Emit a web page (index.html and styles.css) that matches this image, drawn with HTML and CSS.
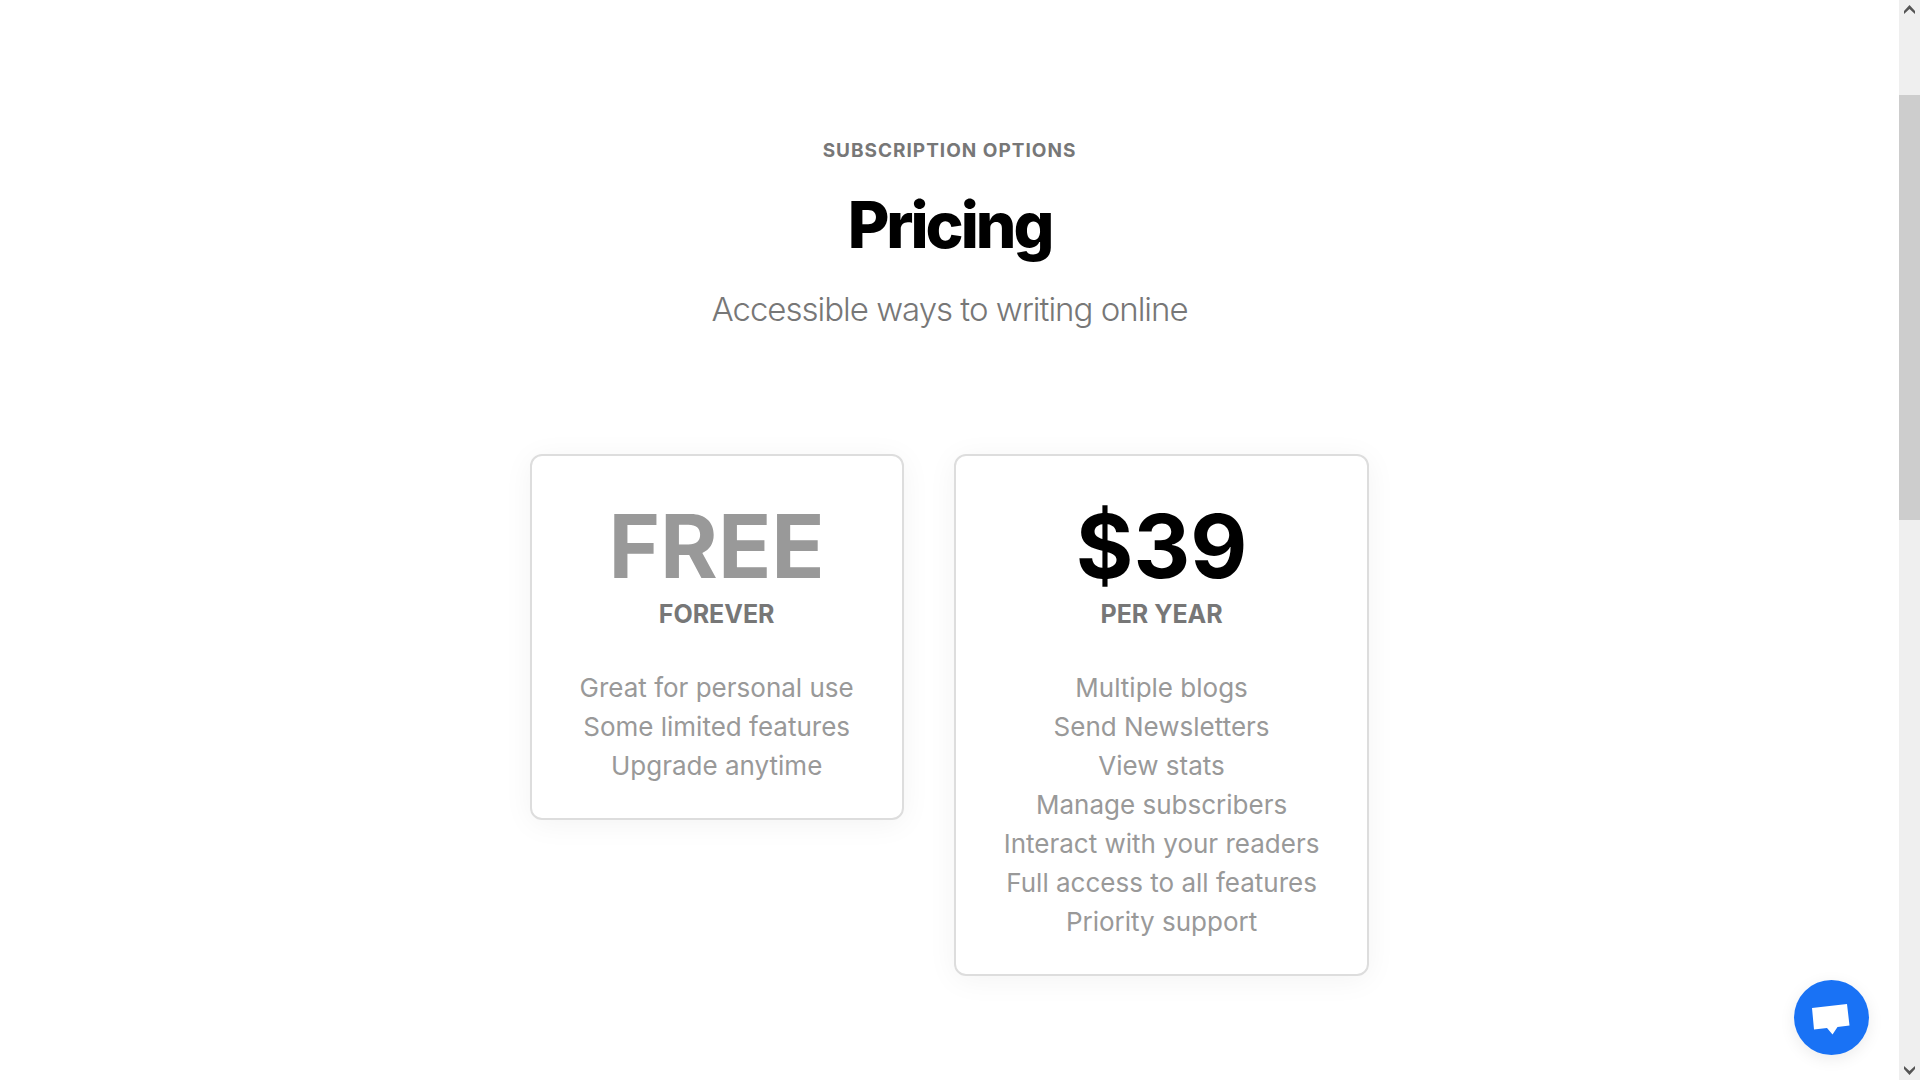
FILE: index.html
```
<!DOCTYPE html>
<html lang="en">
<head>
  <meta charset="utf-8">
  <meta name="viewport" content="width=device-width, initial-scale=1">
  <title>Pricing</title>
  <link rel="stylesheet" href="styles.css">
</head>
<body>

  <main class="page">
    <header class="intro">
      <p class="label">SUBSCRIPTION OPTIONS</p>
      <h1>Pricing</h1>
      <p class="subtitle">Accessible ways to writing online</p>
    </header>

    <section class="plans">
      <div class="plan">
        <h2 class="price free">FREE</h2>
        <h3>FOREVER</h3>
        <ul>
          <li>Great for personal use</li>
          <li>Some limited features</li>
          <li>Upgrade anytime</li>
        </ul>
      </div>
      <div class="plan">
        <h2 class="price">$39</h2>
        <h3>PER YEAR</h3>
        <ul>
          <li>Multiple blogs</li>
          <li>Send Newsletters</li>
          <li>View stats</li>
          <li>Manage subscribers</li>
          <li>Interact with your readers</li>
          <li>Full access to all features</li>
          <li>Priority support</li>
        </ul>
      </div>
    </section>
  </main>

  <!-- scrollbar -->
  <div class="scrollbar">
    <svg class="arrow" viewBox="0 0 21 19"><path d="M5 14V11L10.500 5L16 11V14L10.500 9Z"/></svg>
    <div class="track"><div class="thumb"></div></div>
    <svg class="arrow" viewBox="0 0 21 19"><path d="M5 5V8L10.500 14L16 8V5L10.500 10Z"/></svg>
  </div>

  <button class="chat" type="button" aria-label="Open chat">
    <svg viewBox="0 0 75 75"><path d="M18 28L53 24L55.500 45.500L43.500 47L38.500 54.500L33 48L20 49.500Z"/></svg>
  </button>

</body>
</html>
```
FILE: styles.css
```
* {
  box-sizing: border-box;
}

body {
  margin: 0;
  display: flex;
  height: 100vh;
  overflow: hidden;
  background-color: #fff;
  color: #000;
  font-family: Inter, "Liberation Sans", sans-serif;
  text-align: center;
}

h1, h2, h3, p, ul {
  margin: 0;
  padding: 0;
}

.page {
  flex: 1;
  padding: 137px 24px 0;
}

.label {
  color: #777;
  font-size: 19px;
  font-weight: 700;
  line-height: 28px;
  letter-spacing: 1px;
}

h1 {
  margin-top: 20px;
  font-size: 64px;
  font-weight: 800;
  line-height: 80px;
  letter-spacing: -3px;
}

.subtitle {
  margin-top: 23px;
  color: #777;
  font-size: 33px;
  font-weight: 300;
  line-height: 42px;
  letter-spacing: -1px;
}

.plans {
  display: flex;
  flex-wrap: wrap;
  justify-content: center;
  align-items: flex-start;
  gap: 50px;
  margin-top: 124px;
}

.plan {
  padding: 46px 48px 33px;
  border: 2px solid #ddd;
  border-radius: 12px;
  box-shadow: 0 4px 30px rgba(0, 0, 0, 0.05);
}

.price {
  font-size: 88px;
  font-weight: 700;
  line-height: 88px;
}

.free {
  color: #999;
}

h3 {
  margin-top: 8px;
  color: #777;
  font-size: 25px;
  font-weight: 700;
  line-height: 32px;
}

ul {
  margin-top: 38px;
  list-style: none;
  color: #999;
  font-size: 26px;
  line-height: 39px;
}

.scrollbar {
  display: flex;
  flex-direction: column;
  width: 21px;
  background-color: #efefef;
}

.arrow {
  width: 21px;
  height: 19px;
  fill: #555;
}

.track {
  flex: 1;
  padding-top: 76px;
}

.thumb {
  height: 44%;
  background-color: #cdcdcd;
}

.chat {
  position: fixed;
  right: 51px;
  bottom: 25px;
  width: 75px;
  height: 75px;
  padding: 0;
  border: none;
  border-radius: 50%;
  background-color: #1972f5;
  box-shadow: 0 4px 16px rgba(0, 0, 0, 0.08);
  cursor: pointer;
}

.chat svg {
  display: block;
  fill: #fff;
}
```
